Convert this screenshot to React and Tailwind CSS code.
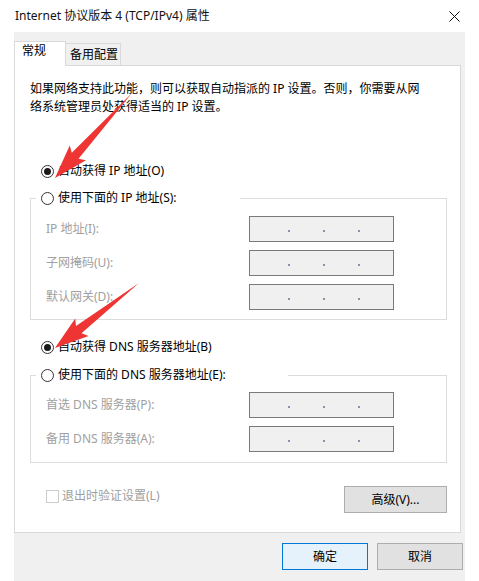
import React from "react";

const font = "font-['Noto_Sans','Noto_Sans_CJK_SC',sans-serif]";

function arrowPoints(tx, ty, px, py) {
  const dx = px - tx;
  const dy = py - ty;
  const len = Math.hypot(dx, dy);
  const ux = dx / len;
  const uy = dy / len;
  const nx = -uy;
  const ny = ux;
  const head = 30;
  const bx = px - ux * head;
  const by = py - uy * head;
  const shaft = 4.5;
  const wing = 11;
  const back = 4;
  const pts = [
    [tx, ty],
    [bx + nx * shaft, by + ny * shaft],
    [bx - ux * back + nx * wing, by - uy * back + ny * wing],
    [px, py],
    [bx - ux * back - nx * wing, by - uy * back - ny * wing],
    [bx - nx * shaft, by - ny * shaft],
  ];
  return pts.map((p) => p.map((v) => v.toFixed(1)).join(",")).join(" ");
}

function Radio({ checked }) {
  return (
    <span className="w-[13px] h-[13px] rounded-full border border-[#333333] bg-white flex items-center justify-center shrink-0">
      {checked && <span className="w-[7px] h-[7px] rounded-full bg-[#1a1a1a]" />}
    </span>
  );
}

function RadioRow({ checked, label }) {
  return (
    <div className="h-[20px] flex items-center pl-[11px] gap-[4px] whitespace-nowrap leading-[16px]">
      <Radio checked={checked} />
      <span>{label}</span>
    </div>
  );
}

function IpBox() {
  return (
    <div className="w-[145px] h-[26px] border border-[#7a7a7a] bg-[#f0f0f0] flex items-center pl-[38px] gap-[33px]">
      <span className="w-[2px] h-[2px] bg-[#8c8fa8] translate-y-[2px]" />
      <span className="w-[2px] h-[2px] bg-[#8c8fa8] translate-y-[2px]" />
      <span className="w-[2px] h-[2px] bg-[#8c8fa8] translate-y-[2px]" />
    </div>
  );
}

function Group({ label, legendWidth, rows, pt, pb }) {
  return (
    <div className="w-[417px]">
      <div className="flex h-[20px]">
        <div className="w-[6px] h-[10px] self-end border-l border-t border-[#dcdcdc]" />
        <div className={`${legendWidth} flex items-center pl-[5px] gap-[4px] whitespace-nowrap leading-[16px]`}>
          <Radio checked={false} />
          <span>{label}</span>
        </div>
        <div className="flex-1 h-[10px] self-end border-t border-r border-[#dcdcdc]" />
      </div>
      <div className={`border-x border-b border-[#dcdcdc] ${pt} ${pb} pl-[15px] flex flex-col gap-[8px]`}>
        {rows.map((r) => (
          <div key={r} className="h-[26px] flex items-center">
            <span className="w-[203px] text-[#a0a0a0] whitespace-nowrap leading-[16px]">{r}</span>
            <IpBox />
          </div>
        ))}
      </div>
    </div>
  );
}

export default function App() {
  return (
    <div className={`relative w-[479px] h-[581px] bg-white overflow-hidden text-[12px] text-black ${font}`}>
      <div className="h-[32px] flex items-center justify-between pl-[15px] pr-[19px]">
        <span className="leading-[16px] text-[#111]">Internet 协议版本 4 (TCP/IPv4) 属性</span>
        <svg width="11" height="11" viewBox="0 0 11 11">
          <path d="M0.5 0.5 L10.5 10.5 M10.5 0.5 L0.5 10.5" stroke="#111" strokeWidth="1" />
        </svg>
      </div>

      <div className="ml-[14px] w-[451px] h-[549px] bg-[#f0f0f0] pt-[9px]">
        <div className="flex items-start h-[24px]">
          <div className="relative z-10 w-[52px] h-[25px] bg-white border-l border-t border-r border-[#d9d9d9] pl-[7px] pt-[1px] leading-[16px]">
            常规
          </div>
          <div className="mt-[2px] w-[55px] h-[22px] border-t border-r border-[#d9d9d9] pl-[4px] pt-[3px] leading-[16px]">
            备用配置
          </div>
        </div>

        <div className="w-[447px] h-[468px] bg-white border border-[#d9d9d9] pl-[15px] pt-[14px]">
          <p className="leading-[18px] whitespace-nowrap">
            如果网络支持此功能，则可以获取自动指派的 IP 设置。否则，你需要从网
            <br />
            络系统管理员处获得适当的 IP 设置。
          </p>

          <div className="mt-[45px]">
            <RadioRow checked label="自动获得 IP 地址(O)" />
          </div>
          <div className="mt-[7px]">
            <Group
              label="使用下面的 IP 地址(S):"
              legendWidth="w-[204px]"
              rows={["IP 地址(I):", "子网掩码(U):", "默认网关(D):"]}
              pt="pt-[8px]"
              pb="pb-[9px]"
            />
          </div>

          <div className="mt-[17px]">
            <RadioRow checked label="自动获得 DNS 服务器地址(B)" />
          </div>
          <div className="mt-[8px]">
            <Group
              label="使用下面的 DNS 服务器地址(E):"
              legendWidth="w-[252px]"
              rows={["首选 DNS 服务器(P):", "备用 DNS 服务器(A):"]}
              pt="pt-[7px]"
              pb="pb-[10px]"
            />
          </div>

          <div className="mt-[23px] w-[417px] flex items-start justify-between">
            <label className="mt-[2px] pl-[16px] flex items-center gap-[3px] text-[#a0a0a0] leading-[16px] whitespace-nowrap">
              <span className="w-[13px] h-[13px] border border-[#cccccc] bg-white" />
              退出时验证设置(L)
            </label>
            <button className="w-[103px] h-[27px] border border-[#adadad] bg-[#e1e1e1] leading-[16px]">
              高级(V)...
            </button>
          </div>
        </div>

        <div className="mt-[10px] flex justify-end gap-[9px] pr-[2px]">
          <button className="w-[86px] h-[27px] border border-[#0078d7] bg-[#e5f1fb] leading-[16px]">确定</button>
          <button className="w-[86px] h-[27px] border border-[#adadad] bg-[#e1e1e1] leading-[16px]">取消</button>
        </div>
      </div>

      <svg className="absolute inset-0 pointer-events-none" width="479" height="581" viewBox="0 0 479 581">
        <polygon points={arrowPoints(132, 93, 55, 178)} fill="#ef3434" />
        <polygon points={arrowPoints(139, 283, 55, 348)} fill="#ef3434" />
      </svg>
    </div>
  );
}
